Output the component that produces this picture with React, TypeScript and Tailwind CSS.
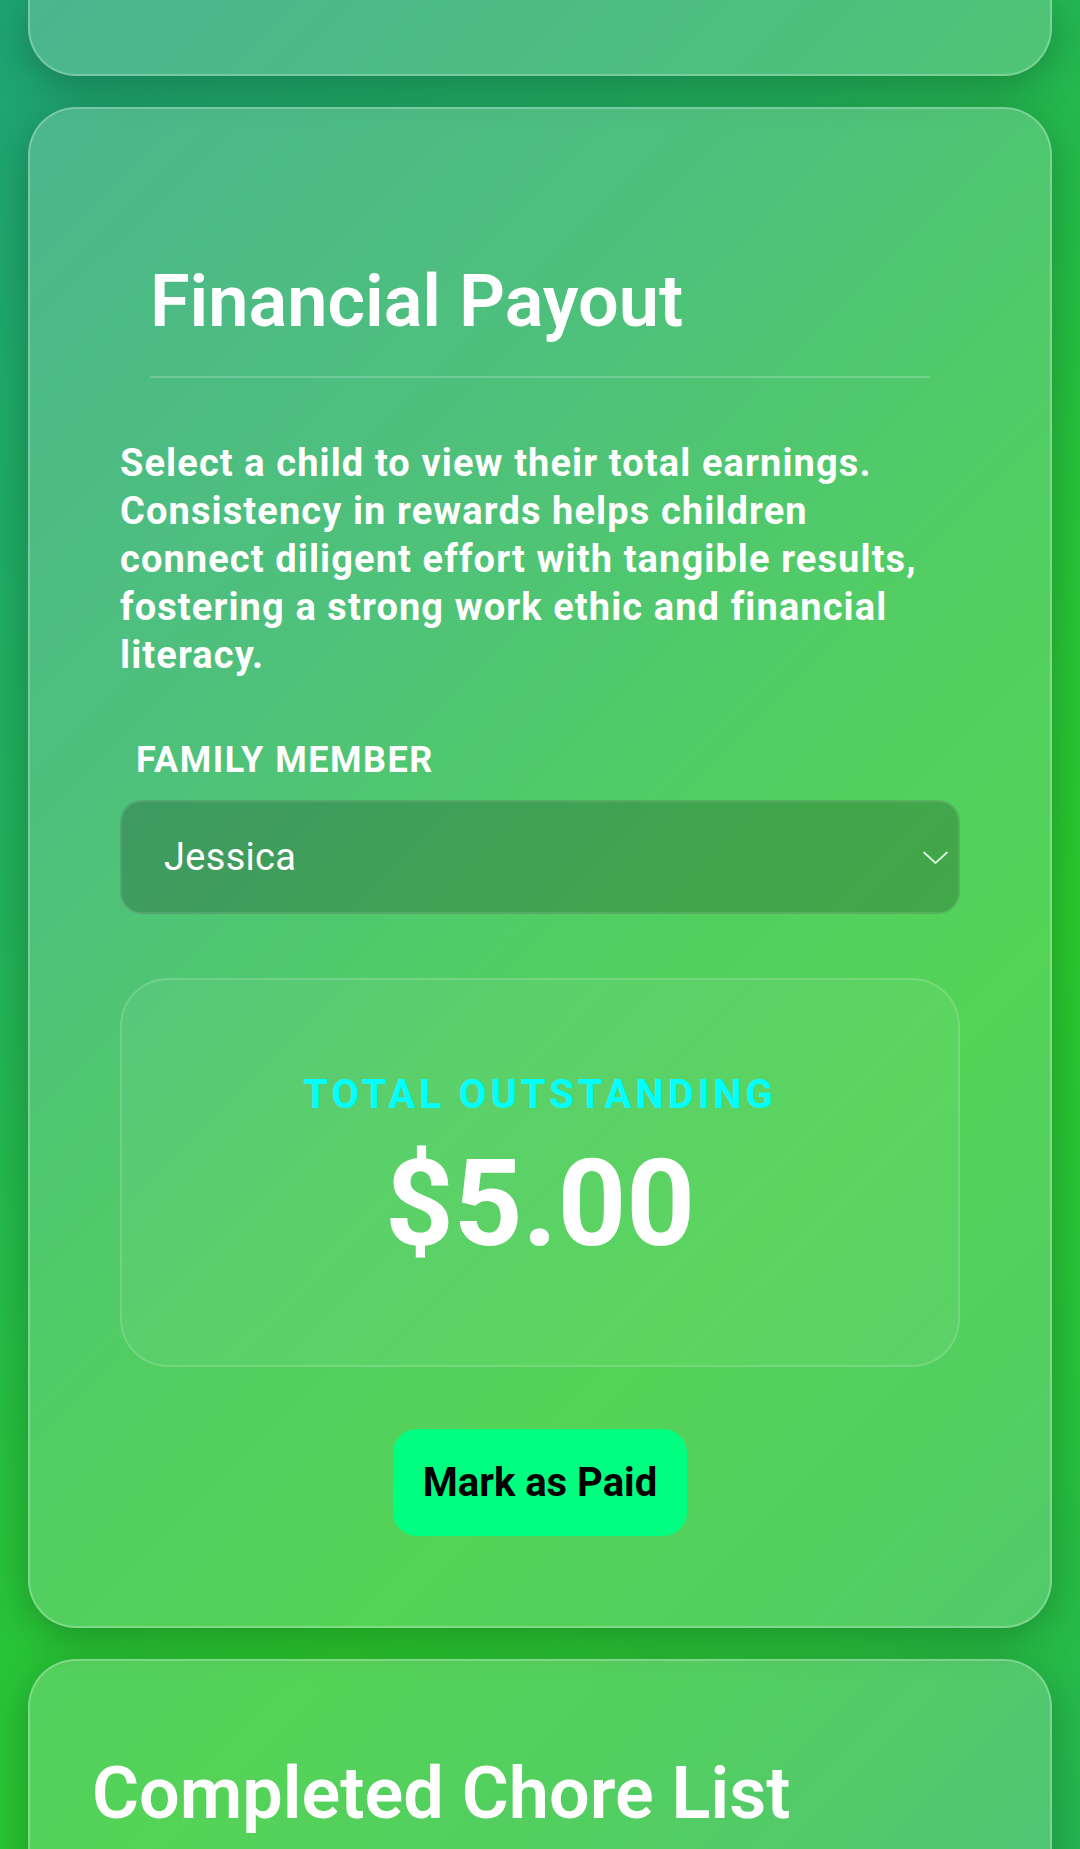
import React from 'react';

const card =
  'rounded-[48px] border-2 border-white/25 bg-white/20 shadow-[0_10px_40px_rgba(0,0,0,0.25)]';

const PayoutCard: React.FC<{ child: string; amount: string }> = ({ child, amount }) => (
  <section className={`${card} px-[90px] pt-[157px] pb-[90px] text-white`}>
    {/* Header */}
    <div className="px-[30px]">
      <h2 className="text-[72px] leading-none font-semibold">Financial Payout</h2>
      <div className="mt-[38px] h-[2px] bg-white/20" />
    </div>

    <p className="mt-[61px] text-[38px] leading-[48px] font-bold tracking-[1.1px]">
      Select a child to view their total earnings. Consistency in rewards helps children connect diligent
      effort with tangible results, fostering a strong work ethic and financial literacy.
    </p>

    <label className="block mt-[61px] ml-[16px] text-[36px] leading-[40px] font-bold tracking-[1.5px]">
      FAMILY MEMBER
    </label>
    <div className="mt-[20px] h-[114px] flex items-center justify-between rounded-[22px] border-2 border-white/10 bg-black/20 pl-[42px] pr-[9px]">
      <span className="text-[38px] font-normal tracking-[0.3px]">{child}</span>
      <svg className="w-[27px] h-[15px]" viewBox="0 0 27 15" fill="none">
        <path d="M1.5 2L13.5 13L25.5 2" stroke="#d9f7dc" strokeWidth="1.8" />
      </svg>
    </div>

    {/* Total box */}
    <div className="mt-[64px] h-[389px] rounded-[48px] border-2 border-white/15 bg-white/5 pt-[91px] flex flex-col items-center">
      <p className="text-[40px] leading-[48px] font-bold tracking-[0.1em] text-[#00ffff]">TOTAL OUTSTANDING</p>
      <p className="mt-[25px] text-[120px] leading-none font-bold">{amount}</p>
    </div>

    <div className="mt-[62px] flex justify-center">
      <button className="h-[107px] px-[30px] rounded-[24px] bg-[#00ff80] text-black text-[40px] font-bold">
        Mark as Paid
      </button>
    </div>
  </section>
);

export default function App() {
  return (
    <div className="h-[1849px] overflow-hidden px-[28px] flex flex-col gap-[31px] font-['Roboto','Liberation_Sans',sans-serif] bg-[linear-gradient(135deg,#1ea374_0%,#22b25a_32%,#27c23c_52%,#2ac82e_68%,#28c23c_84%,#25b653_100%)]">
      {/* previous card, only its bottom is in view */}
      <div className="h-[76px] shrink-0 rounded-b-[48px] border-2 border-t-0 border-white/25 bg-white/20 shadow-[0_10px_40px_rgba(0,0,0,0.25)]" />

      <PayoutCard child="Jessica" amount="$5.00" />

      <section className={`${card} shrink-0 h-[400px] pl-[62px] pt-[97px] text-white`}>
        <h2 className="text-[72px] leading-none font-semibold">Completed Chore List</h2>
      </section>
    </div>
  );
}
